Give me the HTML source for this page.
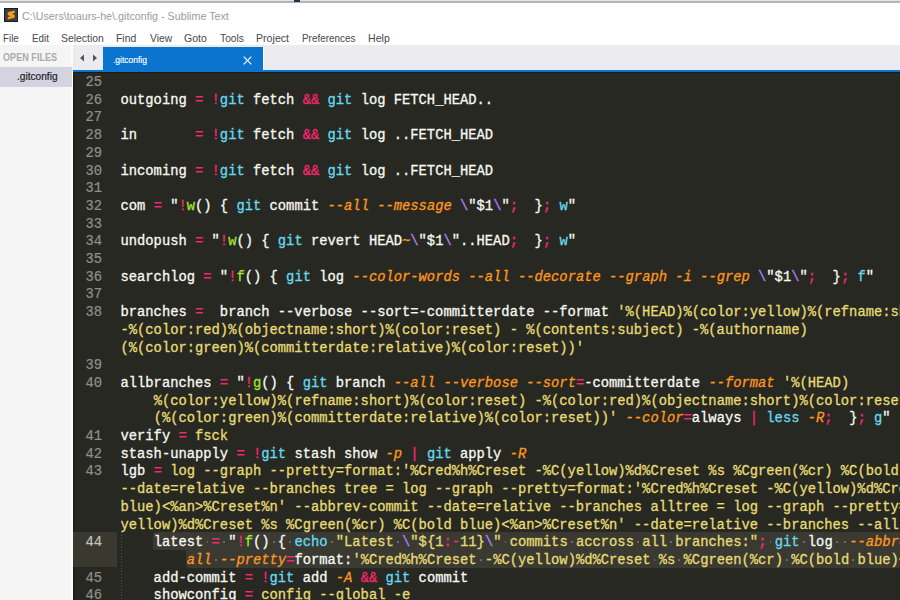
<!DOCTYPE html>
<html><head><meta charset="utf-8">
<style>
html,body{margin:0;padding:0;}
body{width:900px;height:600px;overflow:hidden;background:#fff;position:relative;font-family:"Liberation Sans",sans-serif;}
.abs{position:absolute;}
#topl{left:0;top:0;width:900px;height:1px;background:#e4e4e4;}
#topd{left:0;top:1px;width:900px;height:2px;background:#b4b4b4;}
#icon{left:4px;top:8px;width:14px;height:14px;background:#3b4045;box-sizing:border-box;border:1px solid #1f1f1f;}
#title{left:22.3px;top:9px;font-size:11px;transform-origin:0 0;transform:scaleX(0.976);line-height:15px;color:#9b9b9b;white-space:pre;}
.mi{position:absolute;top:31px;font-size:11.5px;line-height:15px;color:#484848;white-space:pre;transform-origin:0 0;}
#side{left:0;top:45px;width:72px;height:555px;background:#f5f5f5;}
#sdiv{left:71px;top:45px;width:2px;height:555px;background:#fcfcfd;}
#eshadow{left:73px;top:72px;width:2px;height:528px;background:#1f1f1b;}
#ofiles{left:3.1px;top:52px;font-size:10px;transform-origin:0 0;transform:scaleX(0.91);line-height:12px;color:#ababab;font-weight:bold;white-space:pre;}
#srow{left:0;top:67px;width:72px;height:20px;background:#d3d4df;}
#sname{left:16.7px;top:69px;font-size:11px;transform-origin:0 0;transform:scaleX(0.92);line-height:14px;color:#1a1a24;-webkit-text-stroke:0.2px #1a1a24;white-space:pre;}
#tabbar{left:73px;top:45px;width:827px;height:25px;background:#ececf0;}
#tab{left:103px;top:47px;width:160px;height:23px;background:#0a74cf;}
#tabname{left:113.1px;top:52.5px;font-size:9px;transform-origin:0 0;transform:scaleX(0.94);line-height:14px;color:#fff;white-space:pre;-webkit-text-stroke:0.15px #fff;}
#blue{left:73px;top:70px;width:827px;height:2px;background:#0a74cf;}
#dline{left:73px;top:72px;width:827px;height:1px;background:#1e1b14;}
#editor{left:73px;top:72px;width:827px;height:528px;background:#272822;overflow:hidden;}
#gcur{left:73px;top:532px;width:44px;height:35px;background:#3a392f;}
.selb{position:absolute;background:#3a3a32;}
#guide{left:121px;top:532px;width:1px;height:68px;background:repeating-linear-gradient(#525346 0,#525346 1px,transparent 1px,transparent 3px);}
#gutter{left:73px;top:74px;width:29px;height:528px;}
#code{left:120.5px;top:74px;width:780px;height:528px;overflow:hidden;}
.n{position:absolute;right:0;font-family:"Liberation Mono",monospace;font-size:13.8px;line-height:17.7px;color:#8f908a;white-space:pre;-webkit-text-stroke:0.2px currentColor;}
.n.cur{color:#c2c2bf;}
.r{position:absolute;left:0;font-family:"Liberation Mono",monospace;font-size:13.8px;line-height:17.7px;color:#f8f8f2;white-space:pre;-webkit-text-stroke:0.3px currentColor;}
.p{color:#f92672}.c{color:#66d9ef}.g{color:#a6e22e}.o{color:#fd971f;font-style:italic}.y{color:#e6db74}.v{color:#ae81ff}
.d{position:relative;}
.d::after{content:"";position:absolute;left:3.2px;top:6.3px;width:1.8px;height:1.8px;background:#6e6f6c;border-radius:0.5px;}
</style></head><body>
<div class="abs" id="topl"></div><div class="abs" id="topd"></div><div class="abs" style="left:294px;top:0;width:6px;height:2px;background:#1d3550"></div>
<svg class="abs" style="left:4px;top:8px" width="14" height="14" viewBox="0 0 14 14"><rect x="0.5" y="0.5" width="13" height="13" fill="#3a3f44" stroke="#1c1c1c" stroke-width="1"/><path d="M3.7 4.3 L10.7 2.4 L10.7 5.1 L7.9 5.8 L10.7 7.1 L10.7 9.7 L3.7 11.6 L3.7 8.9 L6.5 8.2 L3.7 6.9 Z" fill="#f89c17"/></svg>
<div class="abs" id="title">C:\Users\toaurs-he\.gitconfig - Sublime Text</div>
<span class="mi" id="m0" style="left:3.26px;transform:scaleX(0.850)">File</span>
<span class="mi" id="m1" style="left:31.63px;transform:scaleX(0.855)">Edit</span>
<span class="mi" id="m2" style="left:61.48px;transform:scaleX(0.904)">Selection</span>
<span class="mi" id="m3" style="left:116.10px;transform:scaleX(0.905)">Find</span>
<span class="mi" id="m4" style="left:149.57px;transform:scaleX(0.892)">View</span>
<span class="mi" id="m5" style="left:183.85px;transform:scaleX(0.917)">Goto</span>
<span class="mi" id="m6" style="left:219.81px;transform:scaleX(0.893)">Tools</span>
<span class="mi" id="m7" style="left:256.04px;transform:scaleX(0.923)">Project</span>
<span class="mi" id="m8" style="left:301.63px;transform:scaleX(0.863)">Preferences</span>
<span class="mi" id="m9" style="left:367.65px;transform:scaleX(0.922)">Help</span>
<div class="abs" id="side"></div>
<div class="abs" id="sdiv"></div>
<div class="abs" id="srow"></div>
<div class="abs" id="ofiles">OPEN FILES</div>
<div class="abs" id="sname">.gitconfig</div>
<div class="abs" id="tabbar"></div>
<svg class="abs" style="left:79px;top:54px" width="20" height="9" viewBox="0 0 20 9"><path d="M5 0.5 L5 7.5 L1 4 Z" fill="#555"/><path d="M14 0.5 L14 7.5 L18 4 Z" fill="#555"/></svg>
<div class="abs" id="tab"></div>
<div class="abs" style="left:263px;top:46px;width:1px;height:24px;background:#fbfbfc"></div>
<div class="abs" id="tabname">.gitconfig</div>
<svg class="abs" style="left:243px;top:56px" width="9" height="9" viewBox="0 0 9 9"><path d="M0.7 0.7 L8.3 8.3 M8.3 0.7 L0.7 8.3" stroke="#fff" stroke-width="1.15"/></svg>
<div class="abs" id="blue"></div>
<div class="abs" id="editor"></div>
<div class="abs" id="dline"></div>
<div class="abs" id="eshadow"></div>
<div class="abs" id="gcur"></div>
<div class="selb" style="left:153px;top:532.2px;width:747px;height:17.7px;border-radius:2px 0 0 2px;"></div>
<div class="selb" style="left:186px;top:549.9px;width:714px;height:17.7px;border-radius:0 0 0 2px;"></div>
<div class="abs" id="guide"></div>
<div class="abs" id="gutter">
<div class="n" style="top:0.00px">25</div>
<div class="n" style="top:17.70px">26</div>
<div class="n" style="top:35.40px">27</div>
<div class="n" style="top:53.10px">28</div>
<div class="n" style="top:70.80px">29</div>
<div class="n" style="top:88.50px">30</div>
<div class="n" style="top:106.20px">31</div>
<div class="n" style="top:123.90px">32</div>
<div class="n" style="top:141.60px">33</div>
<div class="n" style="top:159.30px">34</div>
<div class="n" style="top:177.00px">35</div>
<div class="n" style="top:194.70px">36</div>
<div class="n" style="top:212.40px">37</div>
<div class="n" style="top:230.10px">38</div>
<div class="n" style="top:283.20px">39</div>
<div class="n" style="top:300.90px">40</div>
<div class="n" style="top:354.00px">41</div>
<div class="n" style="top:371.70px">42</div>
<div class="n" style="top:389.40px">43</div>
<div class="n cur" style="top:460.20px">44</div>
<div class="n" style="top:495.60px">45</div>
<div class="n" style="top:513.30px">46</div>
</div>
<div class="abs" id="code">
<div class="r" style="top:0.00px"></div>
<div class="r" style="top:17.70px">outgoing <span class="p">=</span> <span class="p">!</span><span class="c">git</span> fetch <span class="p">&amp;&amp;</span> <span class="c">git</span> log FETCH_HEAD..</div>
<div class="r" style="top:35.40px"></div>
<div class="r" style="top:53.10px">in       <span class="p">=</span> <span class="p">!</span><span class="c">git</span> fetch <span class="p">&amp;&amp;</span> <span class="c">git</span> log ..FETCH_HEAD</div>
<div class="r" style="top:70.80px"></div>
<div class="r" style="top:88.50px">incoming <span class="p">=</span> <span class="p">!</span><span class="c">git</span> fetch <span class="p">&amp;&amp;</span> <span class="c">git</span> log ..FETCH_HEAD</div>
<div class="r" style="top:106.20px"></div>
<div class="r" style="top:123.90px">com <span class="p">=</span> &quot;<span class="p">!</span><span class="g">w</span>() { <span class="c">git</span> commit <span class="o">--all --message</span> <span class="v">\</span>&quot;$1<span class="v">\</span>&quot;<span class="p">;</span>  }<span class="p">;</span> <span class="c">w</span>&quot;</div>
<div class="r" style="top:141.60px"></div>
<div class="r" style="top:159.30px">undopush <span class="p">=</span> &quot;<span class="p">!</span><span class="g">w</span>() { <span class="c">git</span> revert HEAD<span class="o">~</span><span class="v">\</span>&quot;$1<span class="v">\</span>&quot;..HEAD<span class="p">;</span>  }<span class="p">;</span> <span class="c">w</span>&quot;</div>
<div class="r" style="top:177.00px"></div>
<div class="r" style="top:194.70px">searchlog <span class="p">=</span> &quot;<span class="p">!</span><span class="g">f</span>() { <span class="c">git</span> log <span class="o">--color-words --all --decorate --graph -i --grep</span> <span class="v">\</span>&quot;$1<span class="v">\</span>&quot;<span class="p">;</span>  }<span class="p">;</span> <span class="c">f</span>&quot;</div>
<div class="r" style="top:212.40px"></div>
<div class="r" style="top:230.10px">branches <span class="p">=</span>  branch --verbose --sort=-committerdate --format <span class="y">&#x27;%(HEAD)%(color:yellow)%(refname:short)%(color:reset)</span></div>
<div class="r" style="top:247.80px"><span class="y">-%(color:red)%(objectname:short)%(color:reset) - %(contents:subject) -%(authorname)</span></div>
<div class="r" style="top:265.50px"><span class="y">(%(color:green)%(committerdate:relative)%(color:reset))&#x27;</span></div>
<div class="r" style="top:283.20px"></div>
<div class="r" style="top:300.90px">allbranches <span class="p">=</span> &quot;<span class="p">!</span><span class="g">g</span>() { <span class="c">git</span> branch <span class="o">--all --verbose --sort</span><span class="p">=</span>-committerdate <span class="o">--format</span> <span class="y">&#x27;%(HEAD)</span></div>
<div class="r" style="top:318.60px">    <span class="y">%(color:yellow)%(refname:short)%(color:reset) -%(color:red)%(objectname:short)%(color:reset)</span></div>
<div class="r" style="top:336.30px">    <span class="y">(%(color:green)%(committerdate:relative)%(color:reset))&#x27;</span> <span class="o">--color</span><span class="p">=</span>always <span class="p">|</span> <span class="c">less</span> <span class="o">-R</span><span class="p">;</span>  }<span class="p">;</span> <span class="c">g</span>&quot;</div>
<div class="r" style="top:354.00px">verify <span class="p">=</span> <span class="y">fsck</span></div>
<div class="r" style="top:371.70px">stash-unapply <span class="p">=</span> <span class="p">!</span><span class="c">git</span> stash show <span class="o">-p</span> <span class="p">|</span> <span class="c">git</span> apply <span class="o">-R</span></div>
<div class="r" style="top:389.40px">lgb <span class="p">=</span> <span class="y">log --graph --pretty=format:&#x27;%Cred%h%Creset -%C(yellow)%d%Creset %s %Cgreen(%cr) %C(bold blue)</span></div>
<div class="r" style="top:407.10px"><span class="y">--date=relative --branches tree = log --graph --pretty=format:&#x27;%Cred%h%Creset -%C(yellow)%d%Creset</span></div>
<div class="r" style="top:424.80px"><span class="y">blue)&lt;%an&gt;%Creset%n&#x27; --abbrev-commit --date=relative --branches alltree = log --graph --pretty=format</span></div>
<div class="r" style="top:442.50px"><span class="y">yellow)%d%Creset %s %Cgreen(%cr) %C(bold blue)&lt;%an&gt;%Creset%n&#x27; --date=relative --branches --all</span></div>
<div class="r" style="top:460.20px">    <span class="sel">latest<span class="d">&nbsp;</span><span class="p">=</span><span class="d">&nbsp;</span>&quot;<span class="p">!</span><span class="g">f</span>()<span class="d">&nbsp;</span>{<span class="d">&nbsp;</span><span class="c">echo</span><span class="d">&nbsp;</span><span class="y">&quot;Latest</span><span class="d">&nbsp;</span><span class="v">\</span><span class="y">&quot;${1</span><span class="p">:-</span><span class="y">11}</span><span class="v">\</span><span class="y">&quot;</span><span class="d">&nbsp;</span><span class="y">commits</span><span class="d">&nbsp;</span><span class="y">accross</span><span class="d">&nbsp;</span><span class="y">all</span><span class="d">&nbsp;</span><span class="y">branches:&quot;</span><span class="p">;</span><span class="d">&nbsp;</span><span class="c">git</span><span class="d">&nbsp;</span>log<span class="d">&nbsp;</span><span class="d">&nbsp;</span><span class="o">--abbrev-commit</span></span></div>
<div class="r" style="top:477.90px">        <span class="sel"><span class="o">all</span><span class="d">&nbsp;</span><span class="o">--pretty</span><span class="p">=</span>format:<span class="y">&#x27;%Cred%h%Creset</span><span class="d">&nbsp;</span><span class="y">-%C(yellow)%d%Creset</span><span class="d">&nbsp;</span><span class="y">%s</span><span class="d">&nbsp;</span><span class="y">%Cgreen(%cr)</span><span class="d">&nbsp;</span><span class="y">%C(bold</span><span class="d">&nbsp;</span><span class="y">blue)&lt;%an&gt;%Creset%n</span></span></div>
<div class="r" style="top:495.60px">    add-commit <span class="p">=</span> <span class="p">!</span><span class="c">git</span> add <span class="o">-A</span> <span class="p">&amp;&amp;</span> <span class="c">git</span> commit</div>
<div class="r" style="top:513.30px">    showconfig <span class="p">=</span> <span class="y">config --global -e</span></div>
</div>
</body></html>
